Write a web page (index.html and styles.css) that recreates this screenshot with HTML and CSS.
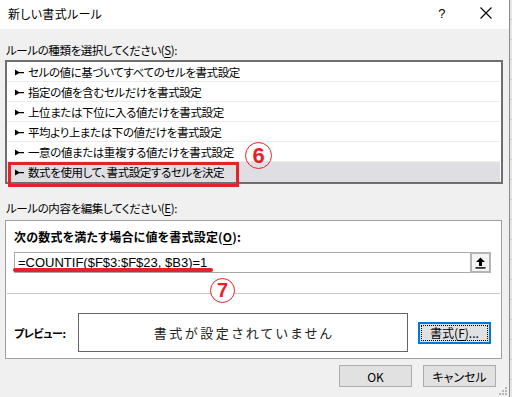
FILE: index.html
```html
<!DOCTYPE html>
<html lang="ja">
<head>
    <meta charset="UTF-8">
    <title>新しい書式ルール</title>
    <link rel="stylesheet" href="styles.css">
</head>
<body>
    <div class="screen">
        <div class="dialog">
            <div class="titlebar">
                <span class="title">新しい書式ルール</span>
                <span class="help">?</span>
                <svg class="close" width="12" height="12" viewBox="0 0 12 12">
                    <path d="M0.5 0.5 L11.5 11.5 M11.5 0.5 L0.5 11.5" stroke="#000" stroke-width="1.1" fill="none"/>
                </svg>
            </div>

            <div class="content">
                <div class="label">ルールの種類を選択してください(<u>S</u>):</div>
                <ul class="rule-list">
                    <li class="rule-item"><svg class="arrow" width="9" height="7" viewBox="0 0 9 7"><path d="M0 0.5 L4 3 L9 3 L9 4.2 L4 4.2 L0 6.5 Z" fill="#000"/></svg>セルの値に基づいてすべてのセルを書式設定</li>
                    <li class="rule-item"><svg class="arrow" width="9" height="7" viewBox="0 0 9 7"><path d="M0 0.5 L4 3 L9 3 L9 4.2 L4 4.2 L0 6.5 Z" fill="#000"/></svg>指定の値を含むセルだけを書式設定</li>
                    <li class="rule-item"><svg class="arrow" width="9" height="7" viewBox="0 0 9 7"><path d="M0 0.5 L4 3 L9 3 L9 4.2 L4 4.2 L0 6.5 Z" fill="#000"/></svg>上位または下位に入る値だけを書式設定</li>
                    <li class="rule-item"><svg class="arrow" width="9" height="7" viewBox="0 0 9 7"><path d="M0 0.5 L4 3 L9 3 L9 4.2 L4 4.2 L0 6.5 Z" fill="#000"/></svg>平均より上または下の値だけを書式設定</li>
                    <li class="rule-item"><svg class="arrow" width="9" height="7" viewBox="0 0 9 7"><path d="M0 0.5 L4 3 L9 3 L9 4.2 L4 4.2 L0 6.5 Z" fill="#000"/></svg>一意の値または重複する値だけを書式設定</li>
                    <li class="rule-item selected"><svg class="arrow" width="9" height="7" viewBox="0 0 9 7"><path d="M0 0.5 L4 3 L9 3 L9 4.2 L4 4.2 L0 6.5 Z" fill="#000"/></svg>数式を使用して、書式設定するセルを決定</li>
                </ul>

                <div class="label label-edit">ルールの内容を編集してください(<u>E</u>):</div>
                <div class="group">
                    <div class="group-title">次の数式を満たす場合に値を書式設定(<u>O</u>):</div>
                    <div class="formula-row">
                        <div class="formula-input">=COUNTIF($F$3:$F$23, $B3)=1</div>
                        <div class="ref-button">
                            <svg width="11" height="12" viewBox="0 0 11 12">
                                <path d="M5.5 0.5 L10 5 L7 5 L7 9 L4 9 L4 5 L1 5 Z" fill="#000"/>
                                <rect x="0.5" y="10.2" width="10" height="1.4" fill="#000"/>
                            </svg>
                        </div>
                    </div>
                    <div class="separator"></div>
                    <div class="preview-row">
                        <div class="preview-label">プレビュー:</div>
                        <div class="preview-box">書式が設定されていません</div>
                        <button class="btn btn-format"><span class="focus">書式(<u>F</u>)...</span></button>
                    </div>
                </div>

                <div class="actions">
                    <button class="btn">OK</button>
                    <button class="btn">キャンセル</button>
                </div>
            </div>

            <!-- annotations -->
            <div class="mark-box"></div>
            <div class="mark-line"></div>
            <span class="circled circled-6">6</span>
            <span class="circled circled-7">7</span>
            <svg class="grip" width="8" height="8" viewBox="0 0 8 8">
                <rect x="6" y="0" width="2" height="2" fill="#b8b8b8"/>
                <rect x="3" y="3" width="2" height="2" fill="#b8b8b8"/>
                <rect x="6" y="3" width="2" height="2" fill="#b8b8b8"/>
                <rect x="0" y="6" width="2" height="2" fill="#b8b8b8"/>
                <rect x="3" y="6" width="2" height="2" fill="#b8b8b8"/>
                <rect x="6" y="6" width="2" height="2" fill="#b8b8b8"/>
            </svg>
        </div>
        <div class="sheet"></div>
    </div>
</body>
</html>
```

FILE: styles.css
```css
:root {
    --face: #f0f0f0;
    --text: #000;
    --annot: #e8202a;
    --btn-face: #e1e1e1;
    --btn-border: #adadad;
}

* {
    margin: 0;
    padding: 0;
    box-sizing: border-box;
}

body {
    font-family: 'Noto Sans CJK JP', sans-serif;
    font-size: 11.5px;
    letter-spacing: -0.4px;
    font-feature-settings: "palt";
    color: var(--text);
    background: var(--face);
    width: 512px;
    height: 397px;
    overflow: hidden;
}

u {
    text-decoration: underline;
    text-underline-offset: 2px;
}

.screen {
    display: flex;
    height: 397px;
}

.dialog {
    position: relative;
    width: 510px;
    height: 397px;
    background: var(--face);
    border-right: 1px solid #8c8c8c;
}

.sheet {
    flex: 1;
    background-color: #e6e6e6;
    background-image: repeating-linear-gradient(to bottom, transparent 0, transparent 19px, #c8c8c8 19px, #c8c8c8 20px);
}

/* title bar */
.titlebar {
    height: 29px;
    background: #fff;
    display: flex;
    align-items: center;
    padding-left: 8px;
}

.title {
    flex: 1;
    font-size: 12px;
    letter-spacing: 0.3px;
    line-height: 16px;
    margin-top: -2px;
}

.help {
    font-family: 'Liberation Sans', sans-serif;
    font-size: 13px;
    margin-right: 35px;
    margin-top: -2px;
}

.close {
    margin-right: 17px;
    margin-top: -3px;
}

/* main area */
.content {
    padding: 13px 6px 0 5px;
}

.label {
    line-height: 16px;
    padding-left: 1px;
}

.rule-list {
    list-style: none;
    margin-top: 2px;
    height: 124px;
    background: #fff;
    border: 2px solid #6f6f6f;
    padding-right: 1px;
}

.rule-item {
    display: flex;
    align-items: center;
    gap: 4px;
    height: 20px;
    padding-left: 8px;
    border-bottom: 1px solid #ececec;
    line-height: 16px;
}

.rule-item.selected {
    background: #dfdfe3;
    border-bottom: none;
}

.arrow {
    flex-shrink: 0;
    margin-top: 1px;
}

.label-edit {
    margin-top: 16px;
}

.group {
    margin-top: 4px;
    width: 497px;
    height: 139px;
    background: #fff;
    border: 1px solid #a0a0a0;
    padding: 8px 0 0 8px;
}

.group-title {
    font-weight: bold;
    font-size: 12px;
    letter-spacing: 0.2px;
    line-height: 16px;
}

.formula-row {
    display: flex;
    margin-top: 7px;
    height: 21px;
}

.formula-input {
    width: 456px;
    border: 1px solid #a9a9a9;
    border-right: none;
    font-family: 'Liberation Sans', sans-serif;
    font-size: 13px;
    letter-spacing: 0;
    line-height: 19px;
    padding-left: 3px;
}

.ref-button {
    width: 21px;
    border: 2px solid #b4b4b4;
    background: #f4f4f4;
    display: flex;
    align-items: center;
    justify-content: center;
}

.separator {
    margin: 20px 0 0 -7px;
    width: 493px;
    height: 1px;
    background: #c8c8c8;
}

.preview-row {
    display: flex;
    align-items: center;
    margin-top: 19px;
    height: 39px;
}

.preview-label {
    width: 64px;
    font-weight: bold;
    font-size: 11px;
}

.preview-box {
    width: 330px;
    height: 39px;
    border: 1px solid #646464;
    display: flex;
    align-items: center;
    justify-content: center;
    font-size: 13px;
    letter-spacing: 2.6px;
    color: #222;
    padding-left: 2px;
}

.btn {
    font-family: inherit;
    font-size: 12px;
    letter-spacing: 0;
    font-feature-settings: "palt";
    color: var(--text);
    width: 73px;
    height: 22px;
    background: var(--btn-face);
    border: 1px solid var(--btn-border);
}

.btn-format {
    margin-left: 10px;
    border: 2px solid #0078d7;
    padding: 1px;
}

.btn-format .focus {
    display: block;
    height: 100%;
    border: 1px dotted #000;
    line-height: 14px;
}

.actions {
    display: flex;
    justify-content: flex-end;
    gap: 11px;
    margin-top: 6px;
    padding-right: 7px;
}

/* annotations */
.mark-box {
    position: absolute;
    left: 8px;
    top: 162px;
    width: 231px;
    height: 25px;
    border: 3.5px solid var(--annot);
}

.mark-line {
    position: absolute;
    left: 13px;
    top: 268px;
    width: 200px;
    height: 4px;
    border-radius: 2px;
    background: var(--annot);
}

.circled {
    position: absolute;
    display: flex;
    align-items: center;
    justify-content: center;
    border: 1.5px solid var(--annot);
    border-radius: 50%;
    background: #fff;
    color: var(--annot);
    font-family: 'Liberation Sans', sans-serif;
    font-weight: bold;
    letter-spacing: 0;
}

.circled-6 {
    left: 245px;
    top: 142px;
    width: 27px;
    height: 27px;
    font-size: 22px;
    background: transparent;
}

.circled-7 {
    left: 210px;
    top: 278px;
    width: 25px;
    height: 25px;
    font-size: 20px;
}

.grip {
    position: absolute;
    right: 2px;
    bottom: 2px;
}
```
